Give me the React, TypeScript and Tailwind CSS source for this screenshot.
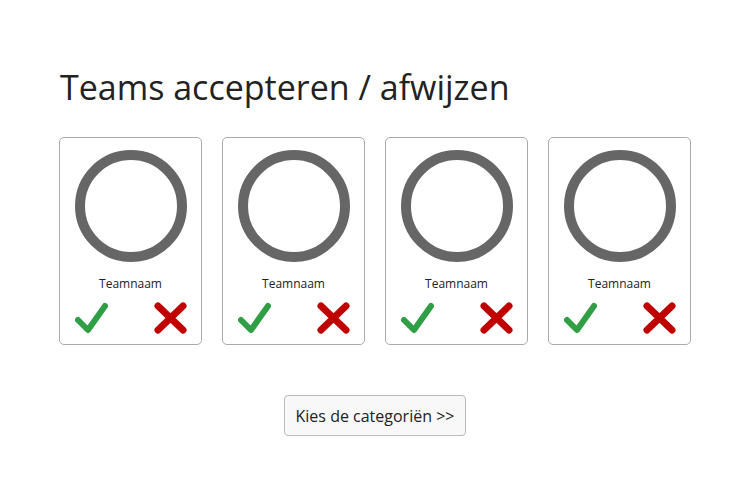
export default function App() {
  const teams = [1, 2, 3, 4];

  return (
    <div className="min-h-screen bg-white font-['Open_Sans',sans-serif] text-[#222]">
      <div className="pl-[59px] pt-[65px]">
        <h1 className="text-[34px] leading-[44px] ml-px">Teams accepteren / afwijzen</h1>

        {/* Team cards */}
        <div className="flex gap-5 mt-[28px]">
          {teams.map((t) => (
            <div
              key={t}
              className="w-[143px] h-[208px] border border-[#aaa] rounded-[5px] flex flex-col items-center"
            >
              <div className="mt-[12px] w-[112px] h-[112px] rounded-full border-[10px] border-[#666]" />
              <div className="mt-[14px] text-[12px] leading-[16px]">Teamnaam</div>
              <div className="mt-[10px] w-[112px] flex justify-between">
                <svg width="33" height="32" viewBox="0 0 33 32">
                  <path
                    d="M3 18 L13 28 L30 4"
                    fill="none"
                    stroke="#2f9e44"
                    strokeWidth="6"
                    strokeLinecap="round"
                    strokeLinejoin="round"
                  />
                </svg>
                <svg width="33" height="32" viewBox="0 0 33 32">
                  <path
                    d="M4 4 L29 28 M29 4 L4 28"
                    fill="none"
                    stroke="#c00000"
                    strokeWidth="7"
                    strokeLinecap="round"
                  />
                </svg>
              </div>
            </div>
          ))}
        </div>
      </div>

      <div className="flex justify-center mt-[50px]">
        <button className="h-[41px] px-[11px] border border-[#bbb] rounded-[4px] bg-[#f8f8f8] text-[16px] text-[#222]">
          Kies de categoriën &gt;&gt;
        </button>
      </div>
    </div>
  );
}
